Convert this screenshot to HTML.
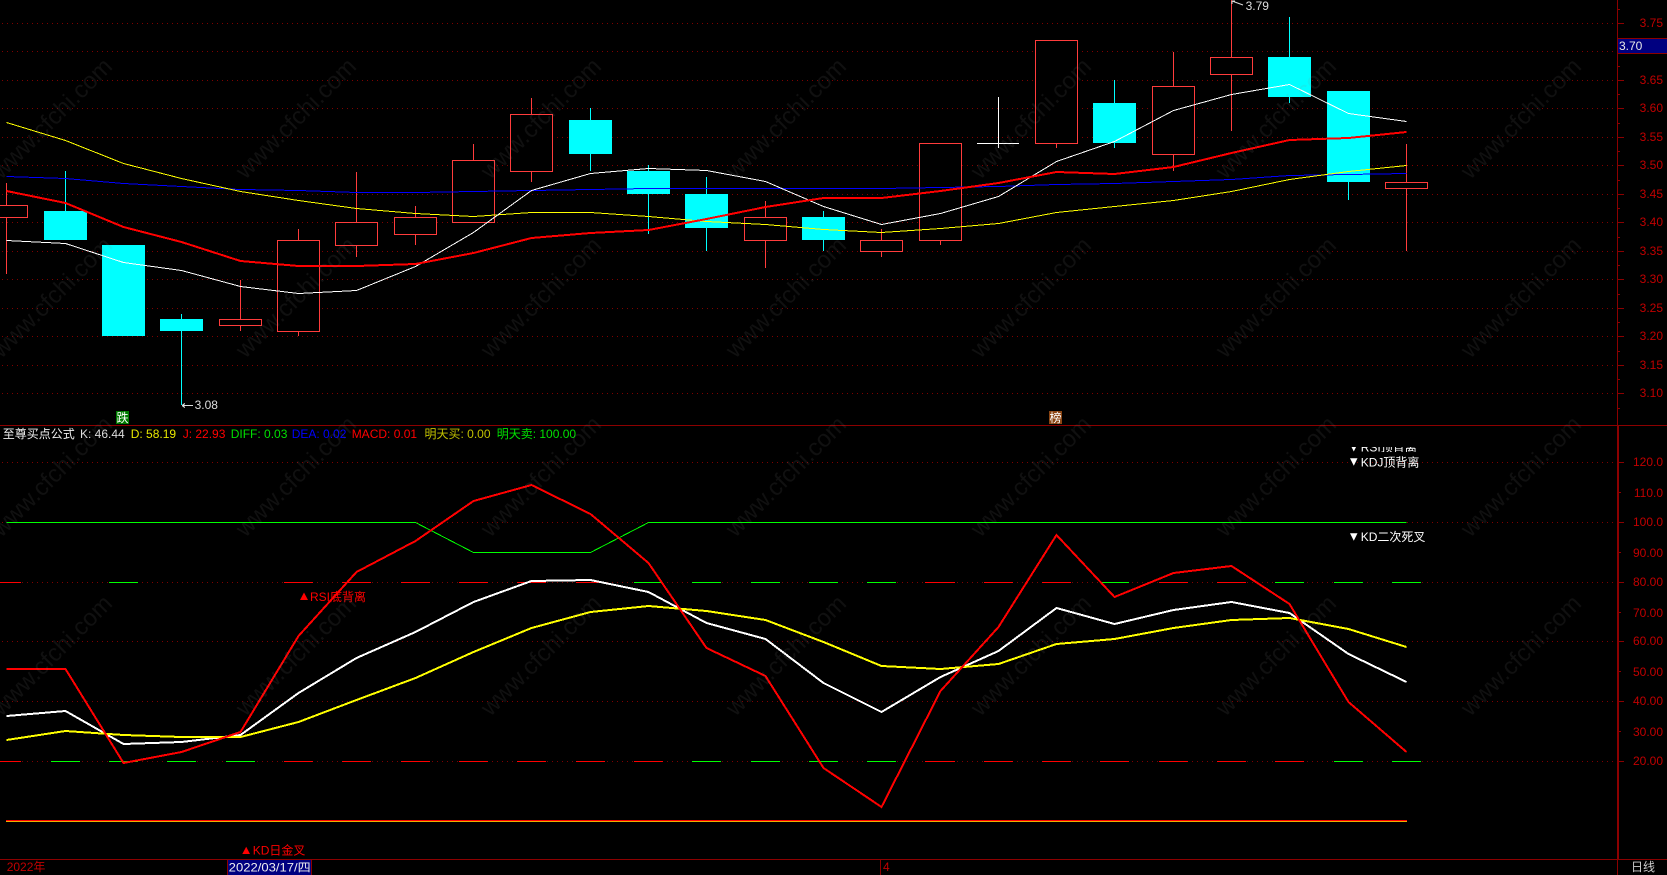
<!DOCTYPE html>
<html lang="zh">
<head>
<meta charset="utf-8">
<title>K线图</title>
<style>
html,body{margin:0;padding:0;background:#000;width:1667px;height:875px;overflow:hidden}
svg{display:block;position:absolute;left:0;top:0}
text{font-family:"Liberation Sans","Noto Sans CJK SC",sans-serif;font-size:12px}
.ax text{fill:#c00000;text-anchor:end}
.c{shape-rendering:crispEdges}
.w text{font-size:24px}
</style>
</head>
<body>
<svg width="1667" height="875" viewBox="0 0 1667 875" xmlns="http://www.w3.org/2000/svg">
<defs><clipPath id="cl"><rect x="1340" y="447" width="100" height="5"/></clipPath></defs>
<rect width="1667" height="875" fill="#000"/>

<!-- grid -->
<g class="c" stroke="#800000" stroke-width="1" stroke-dasharray="1 4" fill="none">
<path d="M2 23.5H1617M2 51.5H1617M2 80.5H1617M2 108.5H1617M2 137.5H1617M2 165.5H1617M2 194.5H1617M2 222.5H1617M2 251.5H1617M2 279.5H1617M2 308.5H1617M2 336.5H1617M2 365.5H1617M2 393.5H1617"/>
<path d="M2 462.5H1617M2 522.5H1617M2 582.5H1617M2 641.5H1617M2 701.5H1617M2 761.5H1617"/>
</g>

<!-- candles -->
<g class="c" fill="none" stroke-width="1">
<path stroke="#ff3c3c" d="M6.5 183V274M240.5 280V331M298.5 229V336M356.5 172V257M415.5 206V245M473.5 144V161M531.5 98V182M765.5 201V268M881.5 229V257M940.5 240V245M1056.5 143V148M1173.5 52V171M1231.5 0V131M1406.5 144V251"/>
<path stroke="#00ffff" d="M65.5 171V211M181.5 314V405M590.5 108V171M648.5 165V234M706.5 177V251M823.5 211V251M1114.5 80V148M1289.5 17V103M1348.5 182V200"/>
<path stroke="#ffffff" d="M977 143.5H1019M998.5 97V148"/>
</g>
<g class="c" fill="#000" stroke="#ff3c3c" stroke-width="1">
<rect x="-14.5" y="205.5" width="42" height="12"/>
<rect x="219.5" y="319.5" width="42" height="6"/>
<rect x="277.5" y="240.5" width="42" height="91"/>
<rect x="335.5" y="222.5" width="42" height="23"/>
<rect x="394.5" y="217.5" width="42" height="17"/>
<rect x="452.5" y="160.5" width="42" height="62"/>
<rect x="510.5" y="114.5" width="42" height="57"/>
<rect x="744.5" y="217.5" width="42" height="23"/>
<rect x="860.5" y="240.5" width="42" height="11"/>
<rect x="919.5" y="143.5" width="42" height="97"/>
<rect x="1035.5" y="40.5" width="42" height="103"/>
<rect x="1152.5" y="86.5" width="42" height="68"/>
<rect x="1210.5" y="57.5" width="42" height="17"/>
<rect x="1385.5" y="182.5" width="42" height="6"/>
</g>
<g class="c" fill="#00ffff">
<rect x="44" y="211" width="43" height="29"/>
<rect x="102" y="245" width="43" height="91"/>
<rect x="160" y="319" width="43" height="12"/>
<rect x="569" y="120" width="43" height="34"/>
<rect x="627" y="171" width="43" height="23"/>
<rect x="685" y="194" width="43" height="34"/>
<rect x="802" y="217" width="43" height="23"/>
<rect x="1093" y="103" width="43" height="40"/>
<rect x="1268" y="57" width="43" height="40"/>
<rect x="1327" y="91" width="43" height="91"/>
</g>

<!-- price MAs -->
<g class="c" fill="none">
<polyline stroke="#0000ff" stroke-width="1" points="6.5,176.5 65.5,178.5 123.5,183.5 181.5,186.5 240.5,189.5 298.5,190.5 356.5,192.5 415.5,192.5 473.5,191.5 531.5,190.5 590.5,189.5 648.5,188.5 706.5,188.5 765.5,188.5 823.5,188.5 881.5,188.5 940.5,187.5 998.5,186.5 1056.5,184.5 1114.5,183.5 1173.5,181.5 1231.5,179.5 1289.5,175.5 1348.5,174.5 1406.5,173.5"/>
<polyline stroke="#ffff00" stroke-width="1" points="6.5,122.5 65.5,140.5 123.5,163.5 181.5,178.5 240.5,191.5 298.5,200.5 356.5,208.5 415.5,213.5 473.5,216.5 531.5,212.5 590.5,212.5 648.5,216.5 706.5,221.5 765.5,224.5 823.5,229.5 881.5,232.5 940.5,228.5 998.5,223.5 1056.5,212.5 1114.5,206.5 1173.5,200.5 1231.5,191.5 1289.5,179.5 1348.5,171.5 1406.5,165.5"/>
<polyline stroke="#ffffff" stroke-width="1" points="6.5,240.5 65.5,243.5 123.5,262.5 181.5,270.5 240.5,286.5 298.5,293.5 356.5,290.5 415.5,266.5 473.5,232.5 531.5,190.5 590.5,173.5 648.5,168.5 706.5,170.5 765.5,181.5 823.5,206.5 881.5,224.5 940.5,213.5 998.5,196.5 1056.5,161.5 1114.5,141.5 1173.5,110.5 1231.5,94.5 1289.5,84.5 1348.5,113.5 1406.5,121.5"/>
<polyline stroke="#ff0000" stroke-width="2" points="6.5,191 65.5,203 123.5,227 181.5,242 240.5,261 298.5,266 356.5,266 415.5,264 473.5,253 531.5,238 590.5,233 648.5,230 706.5,219 765.5,207 823.5,198 881.5,198 940.5,191 998.5,183 1056.5,172 1114.5,174 1173.5,167 1231.5,153 1289.5,140 1348.5,138 1406.5,132"/>
</g>

<!-- dash levels -->
<g class="c" fill="none" stroke-width="1">
<path stroke="#ff0000" d="M0 582.5H21M284 582.5H313M342 582.5H371M401 582.5H430M459 582.5H488M517 582.5H546M576 582.5H605M925 582.5H955M984 582.5H1013M1042 582.5H1071M1159 582.5H1188M1217 582.5H1246"/>
<path stroke="#00ff00" d="M109 582.5H138M634 582.5H663M692 582.5H721M751 582.5H780M809 582.5H838M867 582.5H896M1100 582.5H1129M1275 582.5H1304M1334 582.5H1363M1392 582.5H1421"/>
<path stroke="#ff0000" d="M0 761.5H21M284 761.5H313M342 761.5H371M401 761.5H430M459 761.5H488M517 761.5H546M576 761.5H605M634 761.5H663M925 761.5H955M984 761.5H1013M1042 761.5H1071M1100 761.5H1129M1159 761.5H1188M1217 761.5H1246M1275 761.5H1304"/>
<path stroke="#00ff00" d="M51 761.5H80M109 761.5H138M167 761.5H196M226 761.5H255M692 761.5H721M751 761.5H780M809 761.5H838M867 761.5H896M1334 761.5H1363M1392 761.5H1421"/>
</g>

<!-- indicator lines -->
<g class="c" fill="none">
<polyline stroke="#00ff00" stroke-width="1" points="6.5,522.5 415.5,522.5 473.5,552.5 590.5,552.5 648.5,522.5 1406.5,522.5"/>
<path stroke="#ff0000" d="M6 820.5H1407"/>
<path stroke="#e8b000" d="M6 821.5H1407"/>
<polyline stroke="#ffffff" stroke-width="2" points="6.5,716 65.5,711 123.5,744 181.5,742 240.5,735 298.5,693 356.5,658 415.5,632 473.5,602 531.5,581 590.5,580 648.5,592 706.5,623 765.5,639 823.5,683 881.5,712 940.5,677 998.5,651 1056.5,608 1114.5,624 1173.5,610 1231.5,602 1289.5,613 1348.5,654 1406.5,682"/>
<polyline stroke="#ffff00" stroke-width="2" points="6.5,740 65.5,731 123.5,735 181.5,737 240.5,737 298.5,722 356.5,700 415.5,678 473.5,652 531.5,628 590.5,612 648.5,606 706.5,611 765.5,620 823.5,642 881.5,666 940.5,669 998.5,664 1056.5,644 1114.5,639 1173.5,628 1231.5,620 1289.5,618 1348.5,629 1406.5,647"/>
<polyline stroke="#ff0000" stroke-width="2" points="6.5,669 65.5,669 123.5,763 181.5,752 240.5,732 298.5,636 356.5,572 415.5,541 473.5,501 531.5,485 590.5,514 648.5,563 706.5,648 765.5,676 823.5,768 881.5,807 940.5,691 998.5,627 1056.5,535 1114.5,597 1173.5,573 1231.5,566 1289.5,604 1348.5,702 1406.5,752"/>
</g>

<!-- frame -->
<g class="c" fill="none" stroke="#8c0000" stroke-width="1">
<path d="M0 425.5H1667M0 859.5H1667M1617.5 0V425M1617.5 859V875M880.5 859V875"/>
<path stroke-width="2" d="M1618 425V859"/>
<path d="M1618 23.5H1624M1618 80.5H1624M1618 108.5H1624M1618 137.5H1624M1618 165.5H1624M1618 194.5H1624M1618 222.5H1624M1618 251.5H1624M1618 279.5H1624M1618 308.5H1624M1618 336.5H1624M1618 365.5H1624M1618 393.5H1624"/>
<path d="M1618 9.5H1620M1618 66.5H1620M1618 94.5H1620M1618 123.5H1620M1618 151.5H1620M1618 180.5H1620M1618 208.5H1620M1618 237.5H1620M1618 265.5H1620M1618 294.5H1620M1618 322.5H1620M1618 351.5H1620M1618 379.5H1620M1618 408.5H1620"/>
<path d="M1619 462.5H1624M1619 522.5H1624M1619 582.5H1624M1619 641.5H1624M1619 701.5H1624M1619 761.5H1624"/>
<path d="M1619 492.5H1621M1619 552.5H1621M1619 612.5H1621M1619 671.5H1621M1619 731.5H1621"/>
</g>

<!-- y axis labels -->
<g class="ax">
<text x="1663" y="27">3.75</text>
<text x="1663" y="84">3.65</text>
<text x="1663" y="112">3.60</text>
<text x="1663" y="141">3.55</text>
<text x="1663" y="169">3.50</text>
<text x="1663" y="198">3.45</text>
<text x="1663" y="226">3.40</text>
<text x="1663" y="255">3.35</text>
<text x="1663" y="283">3.30</text>
<text x="1663" y="312">3.25</text>
<text x="1663" y="340">3.20</text>
<text x="1663" y="369">3.15</text>
<text x="1663" y="397">3.10</text>
<text x="1663" y="466">120.0</text>
<text x="1663" y="497">110.0</text>
<text x="1663" y="526">100.0</text>
<text x="1663" y="557">90.00</text>
<text x="1663" y="586">80.00</text>
<text x="1663" y="617">70.00</text>
<text x="1663" y="645">60.00</text>
<text x="1663" y="676">50.00</text>
<text x="1663" y="705">40.00</text>
<text x="1663" y="736">30.00</text>
<text x="1663" y="765">20.00</text>
</g>

<!-- current price box -->
<rect class="c" x="1618" y="38" width="49" height="16" fill="#000080"/>
<path class="c" d="M1618 38.5H1667M1618 53.5H1667" stroke="#8c0000" fill="none"/>
<text x="1619" y="50" fill="#e8e8e8">3.70</text>

<!-- extremes -->
<g fill="none" stroke="#dddddd" stroke-width="1">
<path class="c" d="M182 405.5H193M182 405.5l3-2M182 405.5l3 2"/>
<path d="M1232 1l11 4M1232 1h3M1232 1v3"/>
</g>
<text x="194.6" y="409" fill="#dddddd">3.08</text>
<text x="1245.6" y="10" fill="#dddddd">3.79</text>

<!-- tags -->
<rect class="c" x="116" y="411" width="13" height="13" fill="#007a00"/>
<text x="116.5" y="422" fill="#fff">跌</text>
<rect class="c" x="1049" y="411" width="13" height="13" fill="#8b4513"/>
<text x="1049.5" y="422" fill="#fff">榜</text>

<!-- legend -->
<text x="2.7" y="438" fill="#eeeeee">至尊买点公式</text>
<text x="80" y="438" fill="#dddddd">K: 46.44</text>
<text x="130.7" y="438" fill="#e8e800">D: 58.19</text>
<text x="182.7" y="438" fill="#ff0000">J: 22.93</text>
<text x="230.7" y="438" fill="#00e000">DIFF: 0.03</text>
<text x="291.7" y="438" fill="#0000ff">DEA: 0.02</text>
<text x="351.7" y="438" fill="#ff0000">MACD: 0.01</text>
<text x="424.5" y="438" fill="#c0c000">明天买: 0.00</text>
<text x="496.7" y="438" fill="#00e000">明天卖: 100.00</text>

<!-- signals -->
<polygon points="300,600 308,600 304,592.5" fill="#ff0000"/>
<text x="310" y="601" fill="#ff0000">RSI底背离</text>
<polygon points="242.3,854 250,854 246.2,846.7" fill="#ff0000"/>
<text x="252.7" y="854.5" fill="#ff0000">KD日金叉</text>
<g clip-path="url(#cl)">
<polygon points="1350,444 1357.5,444 1353.8,451.5" fill="#ffffff"/>
<text x="1360.7" y="451.5" fill="#ffffff">RSI顶背离</text>
</g>
<polygon points="1350,458.3 1357.5,458.3 1353.8,465.7" fill="#ffffff"/>
<text x="1360.7" y="466.5" fill="#ffffff">KDJ顶背离</text>
<polygon points="1350,533.3 1357.5,533.3 1353.8,540.7" fill="#ffffff"/>
<text x="1360.7" y="541" fill="#ffffff">KD二次死叉</text>

<!-- time axis -->
<text x="6.7" y="871" fill="#c00000">2022年</text>
<rect class="c" x="227" y="860" width="85" height="15" fill="#000080"/>
<path class="c" d="M227.5 860V875M311.5 860V875" stroke="#8c0000" fill="none"/>
<text x="228.7" y="871.5" fill="#eeeeee" textLength="82" lengthAdjust="spacingAndGlyphs">2022/03/17/四</text>
<text x="883" y="871" fill="#c00000">4</text>
<text x="1631" y="871" fill="#cccccc">日线</text>

<!-- watermark -->
<g class="w" fill="rgba(128,128,128,0.12)" text-anchor="middle">
<text transform="translate(51.5,118) rotate(-45)" dy="8.5">www.cfchi.com</text>
<text transform="translate(295.5,118) rotate(-45)" dy="8.5">www.cfchi.com</text>
<text transform="translate(540.5,118) rotate(-45)" dy="8.5">www.cfchi.com</text>
<text transform="translate(785.5,118) rotate(-45)" dy="8.5">www.cfchi.com</text>
<text transform="translate(1030.5,118) rotate(-45)" dy="8.5">www.cfchi.com</text>
<text transform="translate(1275.5,118) rotate(-45)" dy="8.5">www.cfchi.com</text>
<text transform="translate(1520.5,118) rotate(-45)" dy="8.5">www.cfchi.com</text>
<text transform="translate(51.5,297) rotate(-45)" dy="8.5">www.cfchi.com</text>
<text transform="translate(295.5,297) rotate(-45)" dy="8.5">www.cfchi.com</text>
<text transform="translate(540.5,297) rotate(-45)" dy="8.5">www.cfchi.com</text>
<text transform="translate(785.5,297) rotate(-45)" dy="8.5">www.cfchi.com</text>
<text transform="translate(1030.5,297) rotate(-45)" dy="8.5">www.cfchi.com</text>
<text transform="translate(1275.5,297) rotate(-45)" dy="8.5">www.cfchi.com</text>
<text transform="translate(1520.5,297) rotate(-45)" dy="8.5">www.cfchi.com</text>
<text transform="translate(51.5,476) rotate(-45)" dy="8.5">www.cfchi.com</text>
<text transform="translate(295.5,476) rotate(-45)" dy="8.5">www.cfchi.com</text>
<text transform="translate(540.5,476) rotate(-45)" dy="8.5">www.cfchi.com</text>
<text transform="translate(785.5,476) rotate(-45)" dy="8.5">www.cfchi.com</text>
<text transform="translate(1030.5,476) rotate(-45)" dy="8.5">www.cfchi.com</text>
<text transform="translate(1275.5,476) rotate(-45)" dy="8.5">www.cfchi.com</text>
<text transform="translate(1520.5,476) rotate(-45)" dy="8.5">www.cfchi.com</text>
<text transform="translate(51.5,655) rotate(-45)" dy="8.5">www.cfchi.com</text>
<text transform="translate(295.5,655) rotate(-45)" dy="8.5">www.cfchi.com</text>
<text transform="translate(540.5,655) rotate(-45)" dy="8.5">www.cfchi.com</text>
<text transform="translate(785.5,655) rotate(-45)" dy="8.5">www.cfchi.com</text>
<text transform="translate(1030.5,655) rotate(-45)" dy="8.5">www.cfchi.com</text>
<text transform="translate(1275.5,655) rotate(-45)" dy="8.5">www.cfchi.com</text>
<text transform="translate(1520.5,655) rotate(-45)" dy="8.5">www.cfchi.com</text>
</g>
</svg>
</body>
</html>
